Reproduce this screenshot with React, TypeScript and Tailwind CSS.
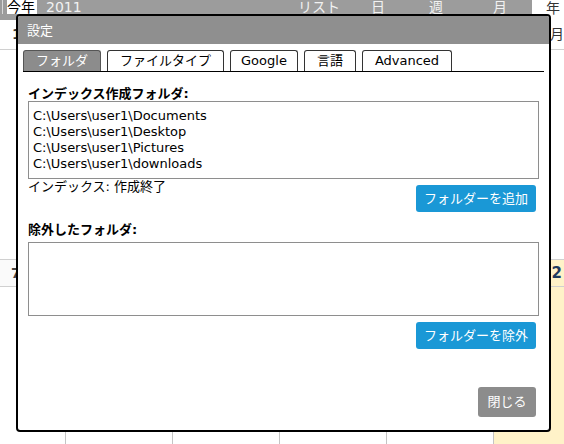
export default function App() {
  const tabs = ["フォルダ", "ファイルタイプ", "Google", "言語", "Advanced"];
  const folders = [
    "C:\\Users\\user1\\Documents",
    "C:\\Users\\user1\\Desktop",
    "C:\\Users\\user1\\Pictures",
    "C:\\Users\\user1\\downloads",
  ];
  return (
    <div className="relative w-[564px] h-[444px] overflow-hidden bg-white text-[13px] text-[#222] font-['DejaVu_Sans','Noto_Sans_CJK_JP',sans-serif]">
      {/* background calendar */}
      <div className="flex flex-col">
        <div className="flex h-[20px]">
          <div className="flex w-[532px] shrink-0 bg-[#9c9c9c] text-[#f2f2f2] text-[14px] leading-[15px]">
            <div className="w-[7px] shrink-0 flex">
              <div className="ml-[2px] w-[1px] h-[14px] bg-[#d8d8d8]" />
            </div>
            <span className="w-[30px] h-[14px] shrink-0 bg-white text-black">今年</span>
            <span className="w-[40px] ml-[9px] shrink-0">2011</span>
            <span className="w-[42px] ml-[212px] shrink-0">リスト</span>
            <span className="w-[14px] ml-[31px] shrink-0">日</span>
            <span className="w-[14px] ml-[44px] shrink-0">週</span>
            <span className="w-[14px] ml-[50px] shrink-0">月</span>
          </div>
          <div className="flex-1 pl-[14px] text-[14px] leading-[16px] text-[#333]">年</div>
        </div>
        <div className="h-[30px] border-b border-[#d0d0d0] flex items-center justify-between text-[14px] font-bold text-[#333]">
          <span className="pl-[12px]">1</span>
          <span className="font-normal">5月</span>
        </div>
        <div className="h-[209px]" />
        <div className="flex h-[185px]">
          <div className="w-[65px] shrink-0 flex flex-col">
            <div className="h-[28px] border-t border-b border-[#d0d0d0] bg-[#fafafa] flex items-center pl-[11px] text-[14px] font-bold text-[#444]">7</div>
          </div>
          {[0, 1, 2, 3].map((i) => (
            <div key={i} className="w-[107px] shrink-0 border-l border-[#c4c4c4] flex flex-col">
              <div className="h-[28px] border-t border-b border-[#d0d0d0]" />
            </div>
          ))}
          <div className="flex-1 border-l border-[#c4c4c4] bg-[#fff2c8] flex flex-col">
            <div className="h-[28px] border-t border-b border-[#d0d0d0] flex items-center justify-end pr-[2px] text-[15px] font-bold text-[#1f3a5f]">2</div>
          </div>
        </div>
      </div>

      {/* dialog */}
      <div className="absolute left-[16px] top-[14px] w-[535px] h-[418px] border-2 border-black rounded-[4px] bg-white flex flex-col overflow-hidden">
        <div className="h-[28px] shrink-0 bg-[#8f8f8f] text-white text-[13px] leading-[28px] pl-[9px] pt-[1px]">設定</div>
        <div className="mx-[5px] mt-[6px] flex gap-[6px] border-b border-black">
          {tabs.map((t, i) => (
            <div
              key={t}
              className={
                i === 0
                  ? "h-[21px] px-[12px] border border-b-0 border-[#555] rounded-t-[3px] bg-[#8c8c8c] text-white leading-[20px]"
                  : i === 2
                  ? "h-[21px] pl-[10px] pr-[10px] border border-b-0 border-[#333] rounded-t-[3px] bg-white text-black leading-[20px]"
                  : "h-[21px] px-[12px] border border-b-0 border-[#333] rounded-t-[3px] bg-white text-black leading-[20px]"
              }
            >
              {t}
            </div>
          ))}
        </div>
        <div className="flex-1 flex flex-col px-[10px]">
          <div className="mt-[15px] leading-[14px] font-bold text-black">インデックス作成フォルダ:</div>
          <div className="h-[78px] border border-[#8e8e8e] pt-[6px] pl-[4px] leading-[16px] text-black">
            {folders.map((f) => (
              <div key={f}>{f}</div>
            ))}
          </div>
          <div className="flex justify-between items-start">
            <div className="leading-[16px] text-black">インデックス: 作成終了</div>
            <button className="mt-[6px] mr-[3px] h-[27px] px-[8px] bg-[#1a98d6] text-white rounded-[3px] leading-[27px]">フォルダーを追加</button>
          </div>
          <div className="mt-[10px] leading-[15px] font-bold text-black">除外したフォルダ:</div>
          <div className="mt-[5px] h-[74px] border border-[#8e8e8e]" />
          <button className="self-end mt-[6px] mr-[3px] h-[27px] px-[8px] bg-[#1a98d6] text-white rounded-[3px] leading-[27px]">フォルダーを除外</button>
          <button className="self-end mt-auto mb-[13px] mr-[3px] h-[30px] w-[58px] bg-[#8c8c8c] text-white rounded-[3px] leading-[30px]">閉じる</button>
        </div>
      </div>
    </div>
  );
}
